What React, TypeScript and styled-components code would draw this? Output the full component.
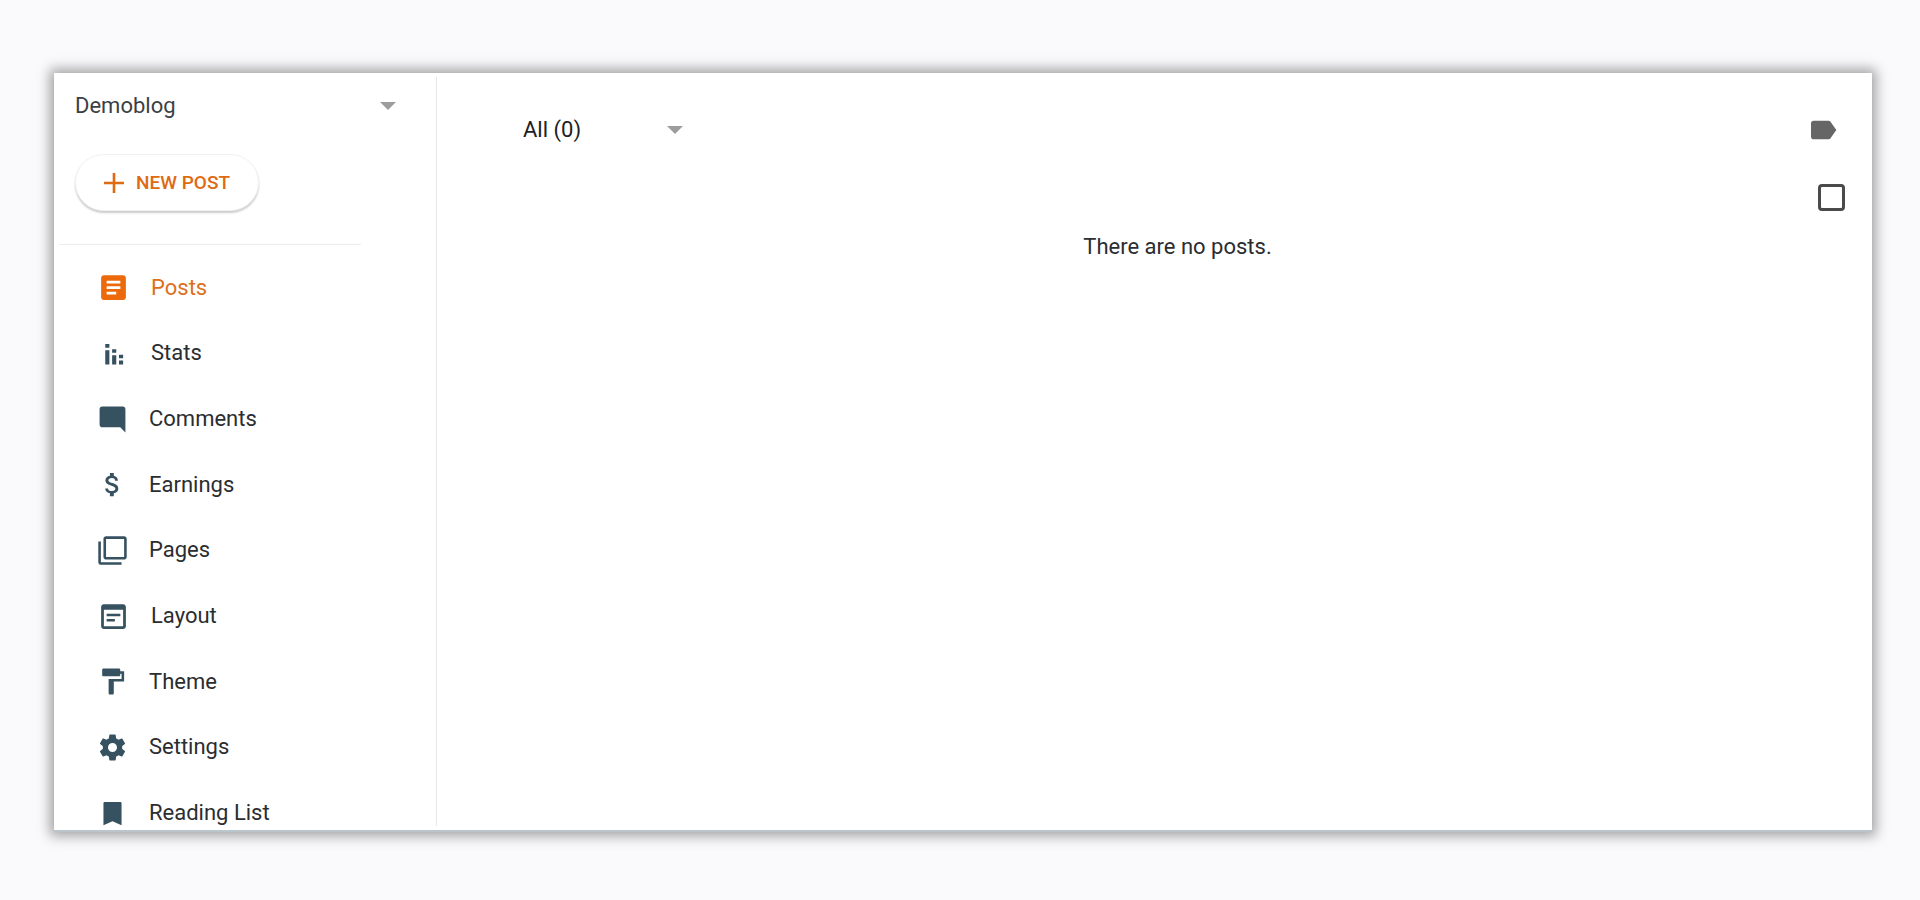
import React from "react";
import styled, { createGlobalStyle } from "styled-components";

const GlobalStyle = createGlobalStyle`
  *, *::before, *::after { box-sizing: border-box; }
  body {
    margin: 0;
    background: #fafafc;
    color: #2b2d30;
    font-family: Roboto, "Liberation Sans", sans-serif;
    font-size: 22px;
    line-height: 28px;
  }
`;

const Page = styled.div`
  height: 100vh;
  padding: 73px 48px 68px 54px;
`;

const Card = styled.div`
  display: flex;
  height: 100%;
  overflow: hidden;
  background: #fff;
  border-bottom: 2px solid #b9c5cb;
  box-shadow: 0 0 12px 4px rgba(0, 0, 0, 0.36);
`;

const Sidebar = styled.aside`
  display: flex;
  flex: none;
  flex-direction: column;
  width: 383px;
  margin: 4px 0;
  border-right: 1px solid #e6e8e9;
`;

const SelectField = styled.div<{ $width: number }>`
  display: grid;
  align-items: center;
  width: ${(p) => p.$width}px;

  > * { grid-area: 1 / 1; }
  > svg { justify-self: end; pointer-events: none; }
`;

const Select = styled.select<{ $color: string }>`
  appearance: none;
  width: 100%;
  height: 34px;
  padding: 0;
  border: 0;
  background: transparent;
  color: ${(p) => p.$color};
  font: inherit;
`;

const BlogPicker = styled.div`
  padding: 12px 0 0 21px;
`;

const NewPost = styled.button`
  display: flex;
  flex: none;
  align-items: center;
  gap: 12px;
  width: 184px;
  height: 57px;
  margin: 31px 0 0 21px;
  padding: 0 0 0 28px;
  border: 1px solid #f1f1f1;
  border-radius: 29px;
  background: #fff;
  box-shadow: 0 2px 2px rgba(0, 0, 0, 0.2);
  color: #df6a12;
  font: 500 19px/24px Roboto, "Liberation Sans", sans-serif;
`;

const Divider = styled.hr`
  flex: none;
  width: 302px;
  height: 1px;
  margin: 33px 0 0 5px;
  border: 0;
  background: #ededed;
`;

const NavList = styled.ul`
  display: grid;
  flex: none;
  grid-auto-rows: 1fr;
  height: 591px;
  margin: 10px 0 0;
  padding: 0 0 0 43px;
  list-style: none;
`;

const NavLink = styled.a<{ $active?: boolean }>`
  display: flex;
  align-items: center;
  gap: 21px;
  height: 100%;
  color: ${(p) => (p.$active ? "#dd701c" : "#2b2d30")};
  text-decoration: none;

  svg { color: ${(p) => (p.$active ? "#ec6a0c" : "#36515f")}; }
`;

const Main = styled.main`
  flex: 1;
  padding: 40px 27px 0 86px;
`;

const Toolbar = styled.div`
  display: flex;
  align-items: center;
  justify-content: space-between;
  padding-right: 6px;
`;

const IconButton = styled.button`
  display: flex;
  padding: 0;
  border: 0;
  background: none;
  color: #666;
`;

const SelectionRow = styled.div`
  display: flex;
  justify-content: flex-end;
  margin-top: 37px;
`;

const Checkbox = styled.input`
  appearance: none;
  width: 27px;
  height: 27px;
  margin: 0;
  border: 3px solid #4a4a4a;
  border-radius: 4px;
  background: #fff;
`;

const EmptyMessage = styled.p`
  margin: 22px 13px 0 0;
  text-align: center;
`;

const Glyph = styled.svg`
  display: block;
  flex: none;
  fill: currentColor;
`;

function Icon({ d, size }: { d: string; size: number }) {
  return (
    <Glyph viewBox="0 0 24 24" width={size} height={size} aria-hidden="true">
      <path d={d} />
    </Glyph>
  );
}

function Caret() {
  return (
    <Glyph viewBox="0 0 16 8" width="16" height="8" aria-hidden="true" color="#9d9d9d">
      <path d="M0 0h16L8 8z" />
    </Glyph>
  );
}

const items = [
  { label: "Posts", size: 33, d: "M19 3H5c-1.1 0-2 .9-2 2v14c0 1.1.9 2 2 2h14c1.1 0 2-.9 2-2V5c0-1.1-.9-2-2-2zm-5 14H7v-2h7v2zm3-4H7v-2h10v2zm0-4H7V7h10v2z" },
  { label: "Stats", size: 33, d: "M6 5h3v2.8H6zM6 9.6h3v10.4H6zM11 8.9h3v2.6h-3zM11 13.2h3V20h-3zM16 12.9h3v2.5h-3zM16 17h3v3h-3z" },
  { label: "Comments", size: 31, d: "M21.99 4c0-1.1-.89-2-1.99-2H4c-1.1 0-2 .9-2 2v12c0 1.1.9 2 2 2h14l4 4-.01-18z" },
  { label: "Earnings", size: 31, d: "M11.8 10.9c-2.27-.59-3-1.2-3-2.15 0-1.09 1.01-1.85 2.7-1.85 1.78 0 2.44.85 2.5 2.1h2.21c-.07-1.72-1.12-3.3-3.21-3.81V3h-3v2.16c-1.94.42-3.5 1.68-3.5 3.61 0 2.31 1.91 3.46 4.7 4.13 2.5.6 3 1.48 3 2.41 0 .69-.49 1.79-2.7 1.79-2.06 0-2.87-.92-2.98-2.1h-2.2c.12 2.19 1.76 3.42 3.68 3.83V21h3v-2.15c1.95-.37 3.5-1.5 3.5-3.55 0-2.84-2.43-3.81-4.7-4.4z" },
  { label: "Pages", size: 31, d: "M3 5H1v16c0 1.1.9 2 2 2h16v-2H3V5zm18-4H7c-1.1 0-2 .9-2 2v14c0 1.1.9 2 2 2h14c1.1 0 2-.9 2-2V3c0-1.1-.9-2-2-2zm0 16H7V3h14v14z" },
  { label: "Layout", size: 33, d: "M19 3H5c-1.1 0-2 .9-2 2v14c0 1.1.9 2 2 2h14c1.1 0 2-.9 2-2V5c0-1.1-.9-2-2-2zm0 16H5V7h14v12zm-2-7.2H7v-1.8h10v1.8zm-4 3.9H7v-1.8h6v1.8z" },
  { label: "Theme", size: 31, d: "M18 4V3c0-.55-.45-1-1-1H5c-.55 0-1 .45-1 1v4c0 .55.45 1 1 1h12c.55 0 1-.45 1-1V6h1v4H9v11c0 .55.45 1 1 1h2c.55 0 1-.45 1-1v-9h8V4h-3z" },
  { label: "Settings", size: 31, d: "M19.43 12.98c.04-.32.07-.64.07-.98s-.03-.66-.07-.98l2.11-1.65c.19-.15.24-.42.12-.64l-2-3.46c-.12-.22-.39-.3-.61-.22l-2.49 1c-.52-.4-1.08-.73-1.69-.98l-.38-2.65C14.46 2.18 14.25 2 14 2h-4c-.25 0-.46.18-.49.42l-.38 2.65c-.61.25-1.17.59-1.69.98l-2.49-1c-.23-.09-.49 0-.61.22l-2 3.46c-.13.22-.07.49.12.64l2.11 1.65c-.04.32-.07.65-.07.98s.03.66.07.98l-2.11 1.65c-.19.15-.24.42-.12.64l2 3.46c.12.22.39.3.61.22l2.49-1c.52.4 1.08.73 1.69.98l.38 2.65c.03.24.24.42.49.42h4c.25 0 .46-.18.49-.42l.38-2.65c.61-.25 1.17-.59 1.69-.98l2.49 1c.23.09.49 0 .61-.22l2-3.46c.12-.22.07-.49-.12-.64l-2.11-1.65zM12 15.5c-1.93 0-3.5-1.57-3.5-3.5s1.57-3.5 3.5-3.5 3.5 1.57 3.5 3.5-1.57 3.5-3.5 3.5z" },
  { label: "Reading List", size: 31, d: "M18 3H6c-.6 0-1 .4-1 1v17l7-3 7 3V4c0-.6-.4-1-1-1z" },
];

export default function App() {
  return (
    <>
      <GlobalStyle />
      <Page>
        <Card>
          <Sidebar>
            <BlogPicker>
              <SelectField $width={321}>
                <Select $color="#3c3f43" aria-label="Blog">
                  <option>Demoblog</option>
                </Select>
                <Caret />
              </SelectField>
            </BlogPicker>
            <NewPost type="button">
              <Glyph viewBox="0 0 20 20" width="20" height="20" aria-hidden="true">
                <path d="M8.7 0h2.6v8.7H20v2.6h-8.7V20H8.7v-8.7H0V8.7h8.7z" />
              </Glyph>
              NEW POST
            </NewPost>
            <Divider />
            <nav aria-label="Blog sections">
              <NavList>
                {items.map((item, i) => (
                  <li key={item.label}>
                    <NavLink href="#" $active={i === 0} aria-current={i === 0 ? "page" : undefined}>
                      <Icon d={item.d} size={item.size} />
                      {item.label}
                    </NavLink>
                  </li>
                ))}
              </NavList>
            </nav>
          </Sidebar>
          <Main>
            <Toolbar>
              <SelectField $width={160}>
                <Select $color="#202124" aria-label="Filter posts">
                  <option>All (0)</option>
                </Select>
                <Caret />
              </SelectField>
              <IconButton type="button" aria-label="Labels">
                <Icon size={32} d="M17.63 5.84C17.27 5.33 16.67 5 16 5L5 5.01C3.9 5.01 3 5.9 3 7v10c0 1.1.9 1.99 2 1.99L16 19c.67 0 1.27-.33 1.63-.84L22 12l-4.37-6.16z" />
              </IconButton>
            </Toolbar>
            <SelectionRow>
              <Checkbox type="checkbox" aria-label="Select all posts" />
            </SelectionRow>
            <EmptyMessage>There are no posts.</EmptyMessage>
          </Main>
        </Card>
      </Page>
    </>
  );
}
